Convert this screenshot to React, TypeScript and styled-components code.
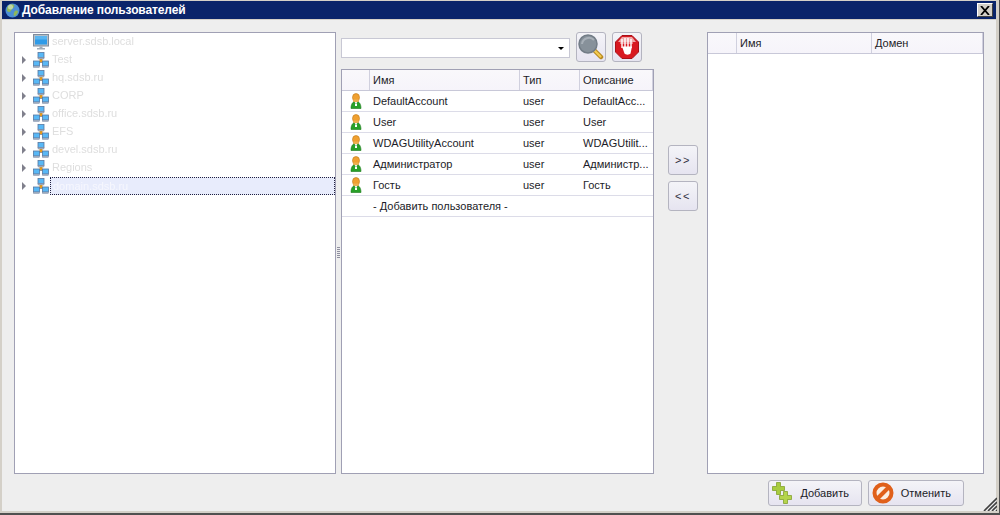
import React from 'react'
import styled, { createGlobalStyle } from 'styled-components'

const GlobalStyle = createGlobalStyle`
  html, body { margin: 0; padding: 0; background: #d4d0c8; }
  body { font-family: "Liberation Sans", Arial, sans-serif; font-size: 11px; color: #1c1c28; }
`

const Window = styled.div`
  box-sizing: border-box;
  width: 1000px;
  height: 515px;
  padding: 1px 4px 4px 2px;
  display: flex;
  background: #d4d0c8;
  box-shadow: inset -1px -2px 0 #505050;
  position: relative;
`
const Pane = styled.div`
  flex: 1;
  min-width: 0;
  display: flex;
  flex-direction: column;
  background: #eeeeee;
`
const TitleBar = styled.div`
  height: 18px;
  flex: none;
  display: flex;
  align-items: center;
  background: #0a246a;
  color: #fff;
  padding: 0 3px;
  border-bottom: 1px solid #d4d0c8;
`
const TitleText = styled.span`
  margin-left: 2px;
  font: bold 12px "Liberation Sans", sans-serif;
  letter-spacing: -0.12px;
  flex: 1;
`
const CloseButton = styled.button`
  box-sizing: border-box;
  width: 16px;
  height: 14px;
  padding: 0;
  display: flex;
  align-items: center;
  justify-content: center;
  background: #d4d0c8;
  border: 1px solid;
  border-color: #fff #404040 #404040 #fff;
`
const Main = styled.div`
  flex: 1;
  min-height: 0;
  display: flex;
  padding: 12px 12px 0 12px;
`
const Panel = styled.div<{ $width?: number }>`
  box-sizing: border-box;
  width: ${({ $width }) => ($width ? `${$width}px` : 'auto')};
  flex: ${({ $width }) => ($width ? 'none' : '1')};
  min-height: 0;
  background: #fff;
  border: 1px solid #a0a0b4;
  display: flex;
  flex-direction: column;
`
const Splitter = styled.div`
  width: 5px;
  flex: none;
  display: flex;
  align-items: center;
  justify-content: center;
  &::before {
    content: '';
    width: 3px;
    height: 12px;
    background: repeating-linear-gradient(#8f8f9f 0 1px, transparent 1px 2px);
  }
`
const TreeRow = styled.div`
  height: 18px;
  display: flex;
  align-items: center;
  flex: none;
`
const Expander = styled.span<{ $hidden?: boolean }>`
  width: 0;
  height: 0;
  margin-left: 7px;
  margin-right: 7px;
  border-style: solid;
  border-width: 4px 0 4px 4px;
  border-color: transparent transparent transparent ${({ $hidden }) => ($hidden ? 'transparent' : '#80808c')};
`
const TreeLabel = styled.span<{ $selected?: boolean }>`
  box-sizing: border-box;
  margin-left: 1px;
  height: 18px;
  line-height: 16px;
  padding-left: 2px;
  color: #dedede;
  white-space: nowrap;
  ${({ $selected }) => $selected && `
    flex: 1;
    background: #e8ecfc;
    border: 1px dotted #202040;
    color: #f6f7fe;
  `}
`
const BlurredText = styled.span`
  filter: blur(0.6px);
`
const Center = styled.div`
  width: 313px;
  flex: none;
  display: flex;
  flex-direction: column;
  min-height: 0;
`
const SearchBar = styled.div`
  height: 37px;
  flex: none;
  display: flex;
  align-items: flex-start;
`
const Combo = styled.div`
  box-sizing: border-box;
  width: 229px;
  height: 20px;
  margin-top: 6px;
  background: #fff;
  border: 1px solid #c8c8d4;
  display: flex;
  align-items: center;
  justify-content: flex-end;
  padding-right: 4px;
  &::after {
    content: '';
    border-style: solid;
    border-width: 3px 3px 0;
    border-color: #000 transparent transparent;
    margin-right: 1px;
  }
`
const IconButton = styled.button`
  box-sizing: border-box;
  width: 30px;
  height: 30px;
  margin-left: 6px;
  padding: 0;
  display: flex;
  align-items: center;
  justify-content: center;
  border: 1px solid #b4b4c0;
  border-radius: 3px;
  background: linear-gradient(#f4f4f8, #e6e4f0);
  font: 11px "Liberation Sans", sans-serif;
  letter-spacing: 1.5px;
  color: #303040;
  flex: none;
`
const Transfer = styled.div`
  width: 53px;
  flex: none;
  display: flex;
  flex-direction: column;
  gap: 6px;
  padding: 113px 0 0 8px;
  box-sizing: border-box;
`
const HeaderRow = styled.div<{ $cols: string }>`
  height: 20px;
  flex: none;
  display: grid;
  grid-template-columns: ${({ $cols }) => $cols};
  background: linear-gradient(#f9f8fb, #f6f4fa);
  border-bottom: 1px solid #c8c8d8;
`
const HeaderCell = styled.div`
  border-right: 1px solid #d0d0de;
  padding-left: 3px;
  line-height: 20px;
  overflow: hidden;
  white-space: nowrap;
`
const DataRow = styled.div<{ $cols: string }>`
  height: 21px;
  flex: none;
  box-sizing: border-box;
  display: grid;
  grid-template-columns: ${({ $cols }) => $cols};
  align-items: center;
  border-bottom: 1px solid #dcdce8;
`
const IconCell = styled.div`
  display: flex;
  justify-content: center;
`
const Cell = styled.div`
  padding-left: 3px;
  white-space: nowrap;
  overflow: hidden;
`
const Footer = styled.div`
  flex: none;
  height: 37px;
  display: flex;
  justify-content: flex-end;
  padding: 6px 32px 0 0;
  box-sizing: border-box;
  gap: 6px;
`
const ActionButton = styled.button<{ $width: number }>`
  box-sizing: border-box;
  width: ${({ $width }) => $width}px;
  height: 26px;
  padding: 0 12px 0 3px;
  display: flex;
  align-items: center;
  justify-content: space-between;
  border: 1px solid #b4b4c0;
  border-radius: 3px;
  background: linear-gradient(#f4f4f8, #e6e4f0);
  font: 11px "Liberation Sans", sans-serif;
  color: #1c1c28;
`
const Grip = styled.svg`
  position: absolute;
  right: 3px;
  bottom: 4px;
`

const Globe = () => (
  <svg width="15" height="15" viewBox="0 0 15 15">
    <circle cx="7.5" cy="7.5" r="7" fill="#4d8fd6" />
    <path d="M3 3c2-2 5-2 6-1 1 2-1 3-2 4s-1 3-3 3-3-3-1-6zM10 8c2-1 3 0 3 1-1 2-2 4-4 4-1-1 0-4 1-5z" fill="#8fb85a" />
    <circle cx="5.5" cy="4" r="2.5" fill="#fff" opacity=".45" />
  </svg>
)
const CloseIcon = () => (
  <svg width="10" height="9" viewBox="0 0 10 9">
    <path d="M1 0l8 9M9 0l-8 9" stroke="#000" strokeWidth="1.8" fill="none" />
  </svg>
)
const Computer = () => (
  <svg width="16" height="16" viewBox="0 0 16 16">
    <rect x="0.5" y="0.5" width="15" height="11.5" fill="#b4bec8" stroke="#7f8c9c" />
    <rect x="2" y="2" width="12" height="8.5" fill="#2f9be8" />
    <path d="M2 2h12v3.5H2z" fill="#6cc0f4" opacity=".7" />
    <path d="M6.5 12.5h3V14h-3zM4 14h8v1.5H4z" fill="#a0acb8" />
  </svg>
)
const NetworkNode = ({ x, y }: { x: number; y: number }) => (
  <g>
    <rect x={x + 0.5} y={y + 0.5} width="6" height="5" fill="#58b8f6" stroke="#5878a0" strokeWidth=".8" />
    <rect x={x + 0.5} y={y + 5.5} width="6" height="1.5" fill="#a8b4c4" stroke="#7080a0" strokeWidth=".4" />
  </g>
)
const Network = () => (
  <svg width="16" height="16" viewBox="0 0 16 16">
    <path d="M8 5v5M4 10h8" stroke="#303030" strokeWidth="1.2" />
    <rect x="6.5" y="7" width="3" height="3" fill="#e89a18" />
    <NetworkNode x={4.5} y={0} />
    <NetworkNode x={0} y={8.5} />
    <NetworkNode x={9} y={8.5} />
  </svg>
)
const UserIcon = () => (
  <svg width="12" height="16" viewBox="0 0 12 16">
    <ellipse cx="6" cy="4.5" rx="3.5" ry="4" fill="#f0a030" stroke="#c07818" strokeWidth=".6" />
    <path d="M3.2 6.5h5.6v2.5H3.2z" fill="#eeb050" />
    <path d="M1 15.5c0-4 1.5-6.5 3.2-6.5L6 11l1.8-2c1.7 0 3.2 2.5 3.2 6.5z" fill="#28a028" stroke="#1a781a" strokeWidth=".6" />
    <path d="M5 10l1 1 1-1v3H5z" fill="#fff" />
  </svg>
)
const Magnifier = () => (
  <svg width="26" height="26" viewBox="0 0 26 26">
    <path d="M16 16l7 7" stroke="#b88a20" strokeWidth="4.5" strokeLinecap="round" />
    <path d="M16.5 16.5l6 6" stroke="#f4cc50" strokeWidth="2.2" strokeLinecap="round" />
    <circle cx="10" cy="10" r="9" fill="#87919a" stroke="#727c86" strokeWidth="1.5" />
    <path d="M4 10a7 7 0 0 1 12-4" stroke="#a8b0b8" strokeWidth="2" fill="none" />
  </svg>
)
const StopHand = () => (
  <svg width="24" height="24" viewBox="0 0 24 24">
    <path d="M7 0.5h10l6.5 6.5v10l-6.5 6.5H7L0.5 17V7z" fill="#d81820" stroke="#a81018" />
    <path d="M3 7l4-5h10l4 5z" fill="#f4c0c0" opacity=".85" />
    <path d="M7 4v9M10 3v9M13 3v9M16 4v9" stroke="#fff" strokeWidth="1.4" fill="none" />
    <path d="M5 8h13" stroke="#fff" strokeWidth=".8" />
    <path d="M7 11.5h10l-1.5 7c-1 1.5-5 1.5-6 0z" fill="#fff" />
  </svg>
)
const PlusMark = ({ x, y, fill }: { x: number; y: number; fill: string }) => (
  <path d={`M${x + 4} ${y}h4v4h4v4h-4v4h-4v-4h-4v-4h4z`} fill={fill} stroke="#7a9a20" strokeWidth=".7" />
)
const AddIcon = () => (
  <svg width="20" height="22" viewBox="0 0 20 22">
    <PlusMark x={0.5} y={0.5} fill="#a8cc40" />
    <PlusMark x={7.5} y={9.5} fill="#b4d44c" />
  </svg>
)
const CancelIcon = () => (
  <svg width="22" height="22" viewBox="0 0 22 22">
    <circle cx="11" cy="11" r="8.5" fill="#fbeee2" stroke="#e0601a" strokeWidth="4" />
    <path d="M5.5 16.5L16.5 5.5" stroke="#e0601a" strokeWidth="4" />
  </svg>
)

const treeItems = ['Test', 'hq.sdsb.ru', 'CORP', 'office.sdsb.ru', 'EFS', 'devel.sdsb.ru', 'Regions']
const users = [
  ['DefaultAccount', 'user', 'DefaultAcc...'],
  ['User', 'user', 'User'],
  ['WDAGUtilityAccount', 'user', 'WDAGUtilit...'],
  ['Администратор', 'user', 'Администр...'],
  ['Гость', 'user', 'Гость'],
]
const userCols = '28px 150px 60px 73px'
const selectedCols = '29px 135px 1fr'

export default function App() {
  return (
    <>
      <GlobalStyle />
      <Window>
        <Pane>
          <TitleBar>
            <Globe />
            <TitleText>Добавление пользователей</TitleText>
            <CloseButton><CloseIcon /></CloseButton>
          </TitleBar>
          <Main>
            <Panel $width={322}>
              <TreeRow>
                <Expander $hidden />
                <Computer />
                <TreeLabel><BlurredText>server.sdsb.local</BlurredText></TreeLabel>
              </TreeRow>
              {treeItems.map((t) => (
                <TreeRow key={t}>
                  <Expander />
                  <Network />
                  <TreeLabel><BlurredText>{t}</BlurredText></TreeLabel>
                </TreeRow>
              ))}
              <TreeRow>
                <Expander />
                <Network />
                <TreeLabel $selected><BlurredText>domain.sdsb.ru</BlurredText></TreeLabel>
              </TreeRow>
            </Panel>
            <Splitter />
            <Center>
              <SearchBar>
                <Combo />
                <IconButton><Magnifier /></IconButton>
                <IconButton><StopHand /></IconButton>
              </SearchBar>
              <Panel>
                <HeaderRow $cols={userCols}>
                  <HeaderCell />
                  <HeaderCell>Имя</HeaderCell>
                  <HeaderCell>Тип</HeaderCell>
                  <HeaderCell>Описание</HeaderCell>
                </HeaderRow>
                {users.map((u) => (
                  <DataRow key={u[0]} $cols={userCols}>
                    <IconCell><UserIcon /></IconCell>
                    <Cell>{u[0]}</Cell>
                    <Cell>{u[1]}</Cell>
                    <Cell>{u[2]}</Cell>
                  </DataRow>
                ))}
                <DataRow $cols={userCols}>
                  <span />
                  <Cell>- Добавить пользователя -</Cell>
                </DataRow>
              </Panel>
            </Center>
            <Transfer>
              <IconButton>&gt;&gt;</IconButton>
              <IconButton>&lt;&lt;</IconButton>
            </Transfer>
            <Panel $width={277}>
              <HeaderRow $cols={selectedCols}>
                <HeaderCell />
                <HeaderCell>Имя</HeaderCell>
                <HeaderCell>Домен</HeaderCell>
              </HeaderRow>
            </Panel>
          </Main>
          <Footer>
            <ActionButton $width={94}><AddIcon />Добавить</ActionButton>
            <ActionButton $width={96}><CancelIcon />Отменить</ActionButton>
          </Footer>
        </Pane>
        <Grip width="14" height="14" viewBox="0 0 14 14">
          <path d="M14 1L1 14M14 5L5 14M14 9L9 14M14 13L13 14" stroke="#404040" strokeWidth="1.6" />
        </Grip>
      </Window>
    </>
  )
}
